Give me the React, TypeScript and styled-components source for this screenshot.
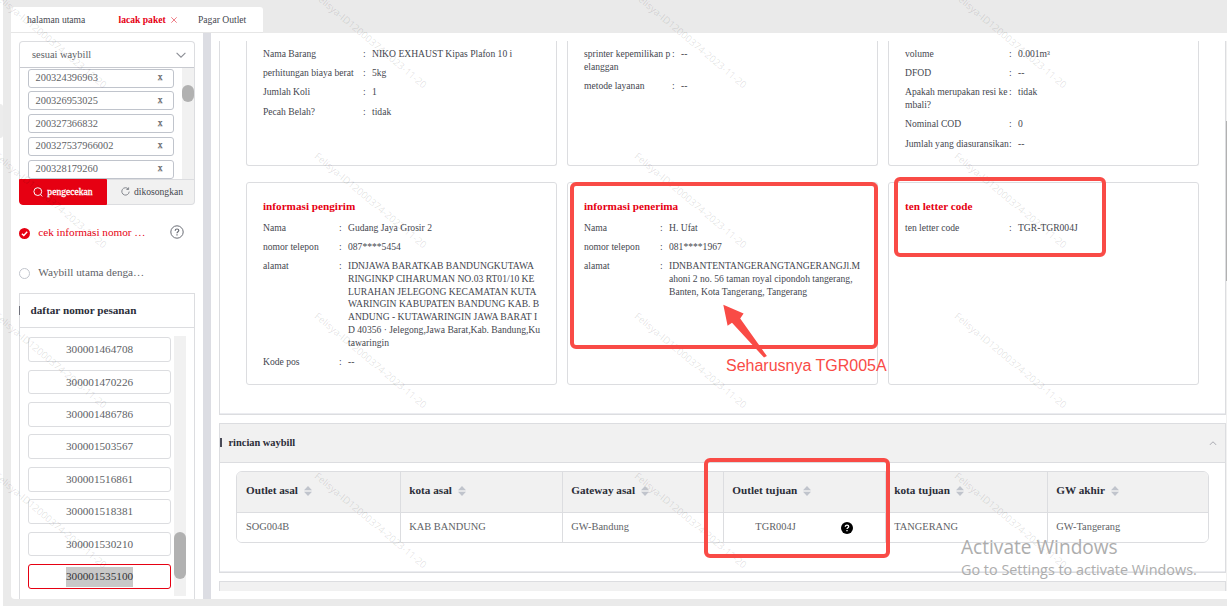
import React from "react";
import styled, { createGlobalStyle, css } from "styled-components";

const RED = "#e60012";
const MARK = "#f94b46";
const LINE = "#dcdde0";

const GlobalStyle = createGlobalStyle`
  *, *::before, *::after { box-sizing: border-box; }
  body {
    margin: 0;
    background: #fff;
    overflow: hidden;
    font-family: "Liberation Serif", "Times New Roman", serif;
    font-size: 9.6px;
    color: #45474f;
  }
`;

const Page = styled.div`
  position: relative;
  display: flex;
  width: 1227px;
  height: 606px;
  overflow: hidden;
`;

const Rail = styled.div`
  width: 3px;
  padding-top: 104px;
`;

const RailHandle = styled.div`
  height: 34px;
  border-radius: 0 3px 3px 0;
  background: #ececec;
`;

const Shell = styled.div`
  flex: 1;
  display: flex;
  flex-direction: column;
  padding: 7px 0 7px 8px;
  background: #eaeaea;
`;

const Tabs = styled.div`
  display: flex;
  width: 252px;
  height: 26px;
  padding: 0 16px;
  border-radius: 3px 3px 0 0;
  border-bottom: 1px solid #e6e6e6;
  background: #fff;
  line-height: 26px;
  white-space: nowrap;
`;

const Tab = styled.div<{ $active?: boolean; $w: number }>`
  display: flex;
  align-items: center;
  gap: 5px;
  flex: 0 0 ${(p) => p.$w}px;
  ${(p) => p.$active && css`color: ${RED}; font-weight: bold;`}
`;

const Workspace = styled.div`
  flex: 1;
  display: flex;
  min-height: 0;
  border-radius: 0 0 0 4px;
  background: #fff;
  overflow: hidden;
`;

const Sidebar = styled.aside`
  width: 192px;
  padding: 8px 8px 0;
  display: flex;
  flex-direction: column;
`;

const Gutter = styled.div`
  width: 8px;
  background: #dcdde3;
`;

const SearchBox = styled.div`
  flex: none;
  width: 176px;
  height: 138px;
  border: 1px solid ${LINE};
  border-bottom: 0;
  border-radius: 4px 4px 0 0;
  overflow: hidden;
`;

const Select = styled.div`
  display: flex;
  align-items: center;
  justify-content: space-between;
  height: 26px;
  padding: 0 8px 0 12px;
  border-bottom: 1px solid #c8cad0;
  font-size: 10.4px;
  color: #606266;
`;

const WaybillArea = styled.div`
  display: flex;
  justify-content: space-between;
  height: 111px;
  overflow: hidden;
`;

const WaybillList = styled.div`
  display: flex;
  flex-direction: column;
  gap: 3.8px;
  padding: 0.6px 0 0 8px;
`;

const WaybillItem = styled.div`
  flex: none;
  display: flex;
  align-items: center;
  justify-content: space-between;
  width: 146px;
  height: 19px;
  padding: 0 10.5px 1px 6.5px;
  border: 1px solid #c0c4cc;
  border-radius: 3px;
  font-size: 10.4px;
  color: #606266;
`;

const Remove = styled.span`
  font-size: 9.6px;
  line-height: 12px;
  padding-bottom: 1px;
  -webkit-text-stroke: 0.25px #606266;
`;

const Track = styled.div<{ $pad: number }>`
  width: 12px;
  padding-top: ${(p) => p.$pad}px;
  background: #f1f1f1;
`;

const Thumb = styled.div<{ $h: number }>`
  height: ${(p) => p.$h}px;
  border-radius: 6px;
  background: #b1b1b1;
`;

const SearchActions = styled.div`
  flex: none;
  display: flex;
  height: 26px;
`;

const ActionButton = styled.button<{ $primary?: boolean }>`
  width: 88px;
  padding: ${(p) => (p.$primary ? "0 0 1px" : "0 0 1px 3px")};
  display: flex;
  align-items: center;
  justify-content: center;
  gap: 4px;
  font: inherit;
  color: ${(p) => (p.$primary ? "#fff" : "#45474f")};
  background: ${(p) => (p.$primary ? RED : "#f1f1f1")};
  border: 1px solid ${(p) => (p.$primary ? RED : LINE)};
  border-radius: ${(p) => (p.$primary ? "0 0 0 4px" : "0 0 4px 0")};
  ${(p) => (p.$primary ? css`-webkit-text-stroke: 0.3px #fff;` : css`border-left: 0;`)}
`;

const Option = styled.div<{ $on?: boolean; $top: number }>`
  display: flex;
  align-items: center;
  height: 16px;
  margin-top: ${(p) => p.$top}px;
  padding-right: 11px;
  font-size: 11.2px;
  color: ${(p) => (p.$on ? RED : "#606266")};
  white-space: nowrap;

  > svg:first-child { margin: 3px 8.3px 0 0; }
  > span { flex: 1; padding-bottom: 1px; }
`;

const OrderBox = styled.div`
  flex: 1;
  width: 176px;
  margin-top: 13px;
  border: 1px solid ${LINE};
  border-bottom: 0;
  min-height: 0;
`;

const OrderTitle = styled.div`
  position: relative;
  height: 34px;
  padding-left: 10.5px;
  border-bottom: 1px solid ${LINE};
  line-height: 33px;
  font-size: 11.2px;
  font-weight: bold;
  color: #2b2d38;

  &::before {
    content: "";
    position: absolute;
    left: -1px;
    top: 12px;
    width: 1px;
    height: 9px;
    background: #70727c;
  }
`;

const OrderArea = styled.div`
  display: flex;
  gap: 3px;
  height: 260px;
  margin: 8px 0 0 8px;
`;

const OrderList = styled.div`
  display: flex;
  flex-direction: column;
  gap: 7.6px;
  padding-top: 1.3px;
`;

const OrderItem = styled.div<{ $on?: boolean }>`
  flex: none;
  width: 143px;
  height: 24.8px;
  display: flex;
  justify-content: center;
  border: 1px solid ${(p) => (p.$on ? RED : LINE)};
  border-radius: 3px;
  font-size: 11.2px;
  line-height: 23px;
  color: #606266;

  > span {
    height: 20px;
    margin-top: 2px;
    line-height: 19px;
    ${(p) => p.$on && css`background: #c8c8c8; color: #35363a;`}
  }
`;

const Main = styled.main`
  flex: 1;
  min-width: 0;
  display: flex;
  padding: 8px 0 8px 8px;
`;

const Sections = styled.div`
  width: 1007px;
`;

const Section = styled.section<{ $h: number }>`
  height: ${(p) => p.$h}px;
  margin-bottom: 8px;
  border: 1px solid ${LINE};
  box-shadow: inset 0 -1px 0 #ebecf0;
`;

const OpenSection = styled(Section)`
  border-top: 0;
`;

const NextSection = styled.div`
  height: 10px;
  border: 1px solid ${LINE};
  border-bottom: 0;
  background: #f1f1f1;
`;

const CardGrid = styled.div`
  display: grid;
  grid-template-columns: repeat(3, 311px);
  grid-template-rows: 125px 203px;
  gap: 16px 10px;
  padding-left: 26px;
`;

const Card = styled.div<{ $cut?: boolean }>`
  padding: ${(p) => (p.$cut ? "7px" : "15.4px")} 0 0 16px;
  border: 1px solid ${LINE};
  border-radius: 3px;
  ${(p) => p.$cut && css`border-top: 0; border-top-left-radius: 0; border-top-right-radius: 0;`}
`;

const CardTitle = styled.h3`
  margin: 0 0 7.2px;
  font-size: 11.2px;
  line-height: 16px;
  color: ${RED};
`;

const Field = styled.div<{ $label: number }>`
  display: grid;
  grid-template-columns: ${(p) => p.$label}px 9px 1fr;
  margin-bottom: 6.4px;
  line-height: 12.8px;
  white-space: pre;
`;

const SectionHead = styled.header`
  display: flex;
  align-items: center;
  height: 39px;
  border-bottom: 1px solid ${LINE};
  background: #f1f1f1;
  font-size: 10.4px;
  font-weight: bold;
  color: #2b2d38;

  &::before {
    content: "";
    width: 2px;
    height: 9px;
    margin: 0 6.5px 1px 0;
    background: #4a4b58;
  }
  > span { flex: 1; padding-bottom: 2px; }
  > svg { margin-right: 8px; }
`;

const Table = styled.div`
  width: 973px;
  height: 72px;
  margin: 8px 0 0 16px;
  border: 1px solid ${LINE};
  border-radius: 6px;
  overflow: hidden;
`;

const TableRow = styled.div<{ $head?: boolean }>`
  display: grid;
  grid-template-columns: 164px 162px 161px 162px 162px 160px;
  height: ${(p) => (p.$head ? 41 : 29)}px;
  font-size: ${(p) => (p.$head ? 11.2 : 10.4)}px;
  font-weight: ${(p) => (p.$head ? "bold" : "normal")};
  color: ${(p) => (p.$head ? "#2b2d38" : "#606266")};
  background: ${(p) => (p.$head ? "#f1f1f1" : "#fff")};
  ${(p) => p.$head && css`border-bottom: 1px solid ${LINE};`}
`;

const Cell = styled.div<{ $head?: boolean }>`
  display: flex;
  align-items: center;
  gap: 6px;
  padding: 0 8px ${(p) => (p.$head ? 4 : 2)}px 8.3px;
  border-right: 1px solid ${LINE};
  white-space: nowrap;
  &:first-child { padding-left: 9px; }
  &:last-child { border-right: 0; }
  > svg { margin-top: 2px; }
`;

const Destination = styled.div`
  flex: 1;
  display: flex;
  align-items: center;
  justify-content: space-between;
  padding: 0 24px 0 23px;
  > svg { margin-top: 2px; }
`;

const PageTrack = styled.div`
  width: 1px;
  padding-top: 80px;
  background: #f1f1f1;
`;

const PageThumb = styled.div`
  height: 160px;
  background: #b1b1b1;
`;

const Watermarks = styled.div`
  position: absolute;
  left: -109px;
  top: -40px;
  display: grid;
  grid-template-columns: repeat(4, 320px);
  grid-auto-rows: 160px;
  pointer-events: none;
`;

const Watermark = styled.div`
  display: flex;
  align-items: center;
  justify-content: center;
  transform: rotate(40deg);
  font: 9.8px "Open Sans", "Noto Sans", sans-serif;
  color: rgba(0, 0, 0, 0.12);
  white-space: nowrap;
`;

const Highlight = styled.div<{ $x: number; $y: number; $w: number; $h: number }>`
  position: absolute;
  left: ${(p) => p.$x}px;
  top: ${(p) => p.$y}px;
  width: ${(p) => p.$w}px;
  height: ${(p) => p.$h}px;
  border: 4px solid ${MARK};
  border-radius: 6px;
`;

const Arrow = styled.svg`
  position: absolute;
  left: 720px;
  top: 300px;
`;

const Note = styled.div`
  position: absolute;
  left: 726px;
  top: 356px;
  font: 16px/19px "Liberation Sans", Arial, sans-serif;
  color: ${MARK};
  white-space: nowrap;
`;

const Activation = styled.div`
  position: absolute;
  left: 961px;
  top: 535px;
  font-family: "Open Sans", "Noto Sans", sans-serif;
  color: #adadad;
  white-space: nowrap;
`;

const ActivationTitle = styled.div`
  font-size: 19.1px;
  line-height: 25px;
`;

const ActivationHint = styled.div`
  font-size: 14.4px;
  line-height: 20px;
`;

const Chevron = ({ up, color, w }: { up?: boolean; color: string; w: number }) => (
  <svg width={w} height={w * 0.6} viewBox="0 0 10 6" fill="none" stroke={color} strokeWidth="1.1">
    <path d={up ? "M0.6 5.2 5 1l4.4 4.2" : "M0.6 0.8 5 5.2 9.4 0.8"} />
  </svg>
);

const SortIcon = () => (
  <svg width="8" height="10" viewBox="0 0 8 10" fill="#c0c4cc">
    <path d="M0 4.2 4 0l4 4.2zM0 5.8h8L4 10z" />
  </svg>
);

const TabClose = () => (
  <svg width="6" height="6" viewBox="0 0 6 6" stroke="#ef7f88" strokeWidth="1">
    <path d="M0.3 0.3l5.4 5.4M5.7 0.3l-5.4 5.4" />
  </svg>
);

const SearchIcon = () => (
  <svg width="10" height="10" viewBox="0 0 10 10" fill="none" stroke="#fff" strokeWidth="1">
    <circle cx="4.8" cy="4.6" r="3.9" />
    <path d="M7.4 7.4 9.2 9.4" />
  </svg>
);

const RefreshIcon = () => (
  <svg width="9" height="9" viewBox="0 0 9 9" fill="none" stroke="#7b7e86" strokeWidth="0.9">
    <path d="M7.3 2A3.7 3.7 0 1 0 8.2 4.6M7.6 0.4V2.5H5.4" />
  </svg>
);

const CheckedIcon = () => (
  <svg width="11" height="11" viewBox="0 0 11 11" fill="none">
    <circle cx="5.5" cy="5.5" r="5.5" fill={RED} />
    <path d="M2.9 5.7 4.8 7.4 8.2 3.7" stroke="#fff" strokeWidth="1.4" />
  </svg>
);

const UncheckedIcon = () => (
  <svg width="11" height="11" viewBox="0 0 11 11" fill="none">
    <circle cx="5.5" cy="5.5" r="5" stroke="#c0c4cc" />
  </svg>
);

const HelpIcon = () => (
  <svg width="14" height="14" viewBox="0 0 14 14" fill="none" stroke="#6a6d75">
    <circle cx="7" cy="7" r="6.2" strokeWidth="1" />
    <path d="M5.2 5.7C5.2 3.4 8.8 3.5 8.8 5.6 8.8 6.8 7 6.8 7 8.2M7 9.2v1.2" strokeWidth="1.2" />
  </svg>
);

const HelpSolidIcon = () => (
  <svg width="12" height="12" viewBox="0 0 12 12" fill="none">
    <circle cx="6" cy="6" r="6" fill="#000" />
    <path d="M4.3 4.7C4.3 2.6 7.7 2.7 7.7 4.6 7.7 5.8 6 5.7 6 7.1M6 8v1.3" stroke="#fff" strokeWidth="1.3" />
  </svg>
);

type Row = [string, string];

const FieldList = ({ rows, label }: { rows: Row[]; label: number }) => (
  <>
    {rows.map(([name, value]) => (
      <Field key={name} $label={label}>
        <span>{name}</span>
        <span>:</span>
        <span>{value}</span>
      </Field>
    ))}
  </>
);

const waybills = ["200324396963", "200326953025", "200327366832", "200327537966002", "200328179260"];

const orders = [
  "300001464708",
  "300001470226",
  "300001486786",
  "300001503567",
  "300001516861",
  "300001518381",
  "300001530210",
  "300001535100",
];

const goods: Row[] = [
  ["Nama Barang", "NIKO EXHAUST Kipas Plafon 10 i"],
  ["perhitungan biaya berat", "5kg"],
  ["Jumlah Koli", "1"],
  ["Pecah Belah?", "tidak"],
];

const service: Row[] = [
  ["sprinter kepemilikan p\nelanggan", "--"],
  ["metode layanan", "--"],
];

const costs: Row[] = [
  ["volume", "0.001m³"],
  ["DFOD", "--"],
  ["Apakah merupakan resi ke\nmbali?", "tidak"],
  ["Nominal COD", "0"],
  ["Jumlah yang diasuransikan", "--"],
];

const sender: Row[] = [
  ["Nama", "Gudang Jaya Grosir 2"],
  ["nomor telepon", "087****5454"],
  [
    "alamat",
    "IDNJAWA BARATKAB BANDUNGKUTAWA\nRINGINKP CIHARUMAN NO.03 RT01/10 KE\nLURAHAN JELEGONG KECAMATAN KUTA\nWARINGIN KABUPATEN BANDUNG KAB. B\nANDUNG - KUTAWARINGIN JAWA BARAT I\nD 40356 · Jelegong,Jawa Barat,Kab. Bandung,Ku\ntawaringin",
  ],
  ["Kode pos", "--"],
];

const receiver: Row[] = [
  ["Nama", "H. Ufat"],
  ["nomor telepon", "081****1967"],
  [
    "alamat",
    "IDNBANTENTANGERANGTANGERANGJl.M\nahoni 2 no. 56 taman royal cipondoh tangerang,\nBanten, Kota Tangerang, Tangerang",
  ],
];

const columns = ["Outlet asal", "kota asal", "Gateway asal", "Outlet tujuan", "kota tujuan", "GW akhir"];

export default function App() {
  return (
    <>
      <GlobalStyle />
      <Page>
        <Rail>
          <RailHandle />
        </Rail>
        <Shell>
          <Tabs>
            <Tab $w={91.5}>halaman utama</Tab>
            <Tab $w={79.5} $active>
              lacak paket <TabClose />
            </Tab>
            <Tab $w={50}>Pagar Outlet</Tab>
          </Tabs>
          <Workspace>
            <Sidebar>
              <SearchBox>
                <Select>
                  sesuai waybill
                  <Chevron color="#8c8e95" w={10} />
                </Select>
                <WaybillArea>
                  <WaybillList>
                    {waybills.map((n) => (
                      <WaybillItem key={n}>
                        {n}
                        <Remove>x</Remove>
                      </WaybillItem>
                    ))}
                  </WaybillList>
                  <Track $pad={17}>
                    <Thumb $h={17} />
                  </Track>
                </WaybillArea>
              </SearchBox>
              <SearchActions>
                <ActionButton $primary>
                  <SearchIcon />
                  pengecekan
                </ActionButton>
                <ActionButton>
                  <RefreshIcon />
                  dikosongkan
                </ActionButton>
              </SearchActions>
              <Option $on $top={19}>
                <CheckedIcon />
                <span>cek informasi nomor …</span>
                <HelpIcon />
              </Option>
              <Option $top={24}>
                <UncheckedIcon />
                <span>Waybill utama denga…</span>
              </Option>
              <OrderBox>
                <OrderTitle>daftar nomor pesanan</OrderTitle>
                <OrderArea>
                  <OrderList>
                    {orders.map((n, i) => (
                      <OrderItem key={n} $on={i === orders.length - 1}>
                        <span>{n}</span>
                      </OrderItem>
                    ))}
                  </OrderList>
                  <Track $pad={196}>
                    <Thumb $h={47} />
                  </Track>
                </OrderArea>
              </OrderBox>
            </Sidebar>
            <Gutter />
            <Main>
              <Sections>
                <OpenSection $h={374}>
                  <CardGrid>
                    <Card $cut>
                      <FieldList rows={goods} label={100} />
                    </Card>
                    <Card $cut>
                      <FieldList rows={service} label={88} />
                    </Card>
                    <Card $cut>
                      <FieldList rows={costs} label={104} />
                    </Card>
                    <Card>
                      <CardTitle>informasi pengirim</CardTitle>
                      <FieldList rows={sender} label={76} />
                    </Card>
                    <Card>
                      <CardTitle>informasi penerima</CardTitle>
                      <FieldList rows={receiver} label={76} />
                    </Card>
                    <Card>
                      <CardTitle>ten letter code</CardTitle>
                      <FieldList rows={[["ten letter code", "TGR-TGR004J"]]} label={104} />
                    </Card>
                  </CardGrid>
                </OpenSection>
                <Section $h={150}>
                  <SectionHead>
                    <span>rincian waybill</span>
                    <Chevron up color="#a0a2aa" w={8} />
                  </SectionHead>
                  <Table>
                    <TableRow $head>
                      {columns.map((c) => (
                        <Cell key={c} $head>
                          {c} <SortIcon />
                        </Cell>
                      ))}
                    </TableRow>
                    <TableRow>
                      <Cell>SOG004B</Cell>
                      <Cell>KAB BANDUNG</Cell>
                      <Cell>GW-Bandung</Cell>
                      <Cell>
                        <Destination>
                          TGR004J
                          <HelpSolidIcon />
                        </Destination>
                      </Cell>
                      <Cell>TANGERANG</Cell>
                      <Cell>GW-Tangerang</Cell>
                    </TableRow>
                  </Table>
                </Section>
                <NextSection />
              </Sections>
              <PageTrack>
                <PageThumb />
              </PageTrack>
            </Main>
          </Workspace>
        </Shell>
        <Watermarks>
          {Array.from({ length: 16 }, (_, i) => (
            <Watermark key={i}>Felisya-ID12000374-2023-11-20</Watermark>
          ))}
        </Watermarks>
        <Activation>
          <ActivationTitle>Activate Windows</ActivationTitle>
          <ActivationHint>Go to Settings to activate Windows.</ActivationHint>
        </Activation>
        <Highlight $x={894} $y={177} $w={212} $h={80} />
        <Highlight $x={570} $y={182} $w={308} $h={167} />
        <Highlight $x={704} $y={458} $w={186} $h={100} />
        <Arrow width="50" height="60" viewBox="0 0 50 60" fill={MARK}>
          <path d="M3.3 4.7 23.6 13.4 20.2 18.6 46.9 56 44 57.4 12 22.8 7.6 25.8z" />
        </Arrow>
        <Note>Seharusnya TGR005A</Note>
      </Page>
    </>
  );
}
